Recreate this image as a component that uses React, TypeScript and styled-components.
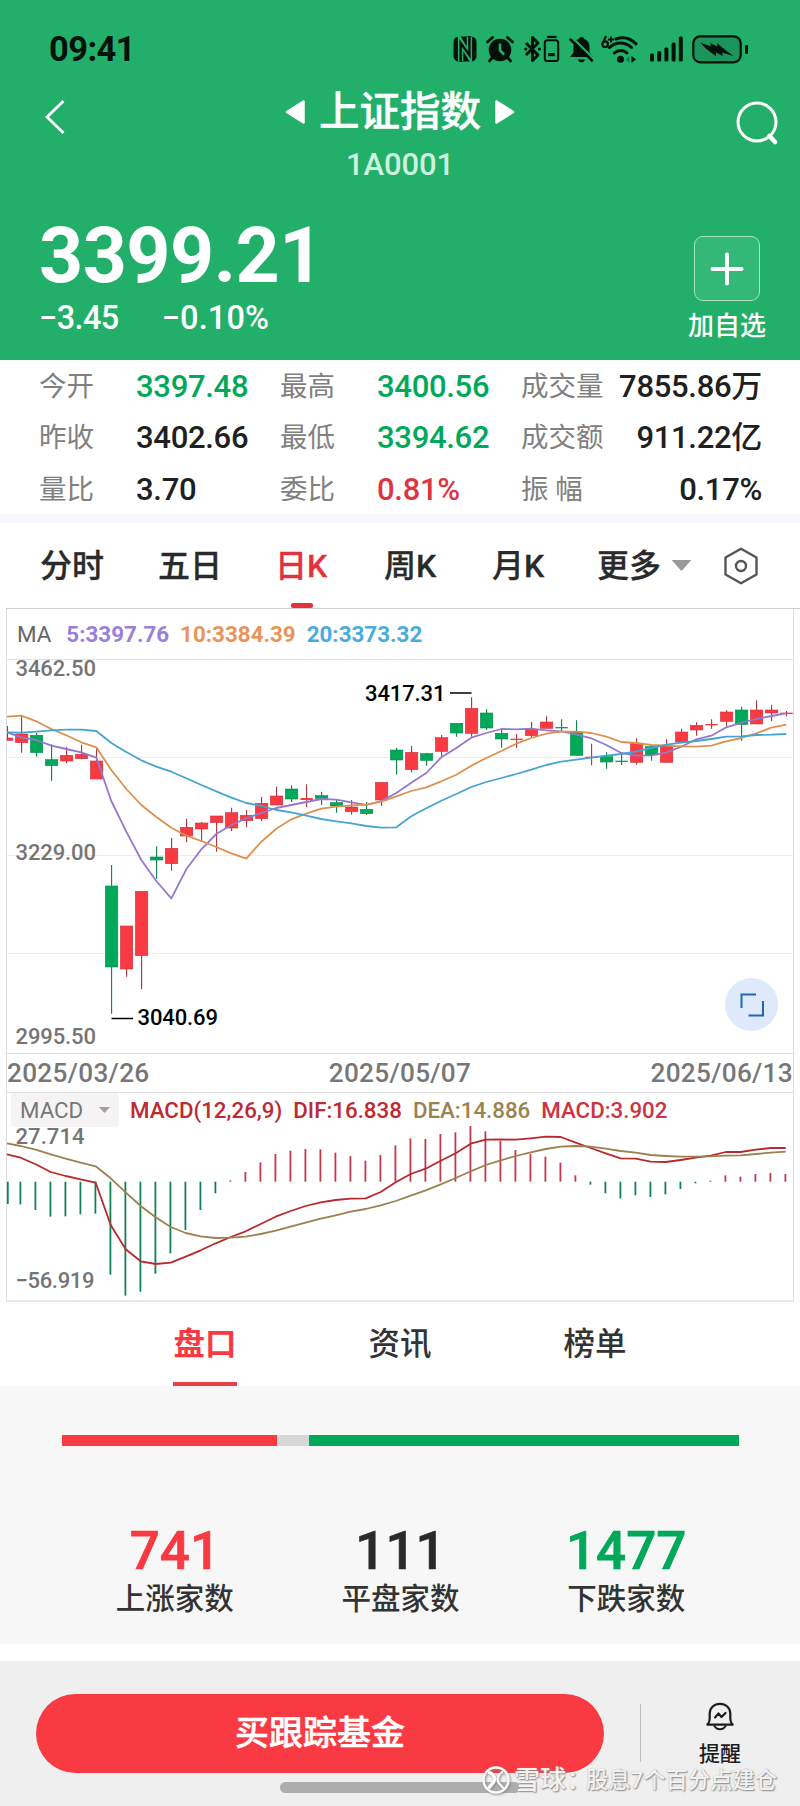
import React from "react";
import styled, { createGlobalStyle } from "styled-components";

const GREEN = "#00a85a";
const RED = "#f93a42";

const Global = createGlobalStyle`
  * { box-sizing: border-box; }
  body { margin: 0; background: #fff; }
`;

const Page = styled.div`
  width: 800px;
  height: 1806px;
  display: flex;
  flex-direction: column;
  background: #fff;
  color: #262626;
  font-family: Roboto, "Noto Sans CJK SC", sans-serif;
  font-weight: 500;
  white-space: nowrap;
  overflow: hidden;
`;

/* ---------- header ---------- */

const Header = styled.header`
  height: 360px;
  flex: none;
  background: #22af69;
  color: #fff;
`;

const StatusBar = styled.div`
  height: 84px;
  padding: 14px 51px 0 49px;
  display: flex;
  align-items: center;
  justify-content: space-between;
  color: #02120a;
`;

const Clock = styled.span`
  font-size: 34.5px;
  font-weight: 700;
  letter-spacing: -0.6px;
`;

const StatusIcons = styled.div`
  display: flex;
  align-items: center;
  svg { display: block; }
`;

const NavBar = styled.div`
  height: 116px;
  display: grid;
  grid-template-columns: 120px 1fr 120px;
`;

const NavSide = styled.div<{ $end?: boolean }>`
  display: flex;
  justify-content: ${(p) => (p.$end ? "flex-end" : "flex-start")};
  padding: ${(p) => (p.$end ? "16px 20px 0 0" : "15px 0 0 43px")};
`;

const TitleBlock = styled.div`
  display: flex;
  flex-direction: column;
  align-items: center;
  padding-top: 2px;
`;

const TitleRow = styled.div`
  display: flex;
  align-items: center;
  gap: 13px;
  height: 52px;
`;

const Title = styled.h1`
  margin: 0;
  font-size: 40.5px;
  line-height: 54px;
  font-weight: 500;
  -webkit-text-stroke: 0.5px currentColor;
`;

const Code = styled.div`
  font-size: 31px;
  line-height: 36px;
  margin-top: 9px;
  font-weight: 500;
  letter-spacing: -0.1px;
  color: #cdf3df;
`;

const Quote = styled.div`
  display: flex;
  justify-content: space-between;
  padding: 0 34px 0 39px;
`;

const Price = styled.div`
  font-size: 77px;
  line-height: 90px;
  font-weight: 700;
  letter-spacing: -0.5px;
  margin-top: 11px;
`;

const Changes = styled.div`
  display: flex;
  gap: 43px;
  font-size: 32.5px;
  line-height: 38px;
  margin-top: -2px;
`;

const Change = styled.span<{ $spacing: number }>`
  letter-spacing: ${(p) => p.$spacing}px;
`;

const AddBox = styled.div`
  display: flex;
  flex-direction: column;
  align-items: center;
  padding-top: 36px;
`;

const AddButton = styled.div`
  width: 66px;
  height: 65px;
  border: 1.5px solid #a6e3c4;
  border-radius: 9px;
  background: #33b877;
  display: grid;
  place-items: center;
`;

const AddLabel = styled.div`
  margin-top: 6px;
  font-size: 26px;
  line-height: 38px;
`;

/* ---------- stats ---------- */

const Stats = styled.section`
  flex: none;
  height: 154px;
  padding: 1px 38px 0 39px;
  display: grid;
  grid-template-columns: 97px 144px 97px 144px 95px 1fr;
  grid-template-rows: repeat(3, 51.5px);
  align-items: center;
  line-height: 40px;
`;

const StatLabel = styled.span`
  font-size: 27.5px;
  font-weight: 400;
  color: #808080;
`;

const StatValue = styled.span<{ $color?: string; $right?: boolean }>`
  font-size: 31px;
  letter-spacing: -0.3px;
  color: ${(p) => p.$color || "#202020"};
  text-align: ${(p) => (p.$right ? "right" : "left")};
  margin-left: ${(p) => (p.$right ? "-20px" : "0")};
`;

const Separator = styled.div`
  flex: none;
  height: 9px;
  background: #f6f6fd;
`;

/* ---------- period tabs ---------- */

const Periods = styled.nav`
  flex: none;
  height: 86px;
  display: flex;
  border-bottom: 1px solid #cfcfcf;
  margin-left: 6px;
  padding-left: 34px;
`;

const Period = styled.div<{ $active?: boolean; $width: number }>`
  width: ${(p) => p.$width}px;
  height: 85px;
  display: flex;
  align-items: center;
  font-size: 32px;
  line-height: 86px;
  color: ${(p) => (p.$active ? "#e2323f" : "#2a2a2a")};
  -webkit-text-stroke: 0.3px currentColor;
`;

const PeriodInner = styled.div<{ $active?: boolean }>`
  height: 85px;
  margin-left: -1px;
  position: relative;
  &::after {
    content: "";
    display: ${(p) => (p.$active ? "block" : "none")};
    position: absolute;
    left: 50%;
    bottom: 0;
    width: 22px;
    height: 5px;
    margin-left: -10px;
    border-radius: 2px;
    background: #e2323f;
  }
`;

const Glyph = styled.svg<{ $ml?: number }>`
  display: block;
  flex: none;
  margin-left: ${(p) => p.$ml || 0}px;
`;

/* ---------- chart ---------- */

const Chart = styled.section`
  flex: none;
  height: 693px;
  width: 788px;
  margin-left: 6px;
  border: 1px solid #dedede;
  border-top: 0;
  border-bottom: 2px solid #e8e8e8;
`;

const Averages = styled.div`
  height: 50px;
  display: flex;
  gap: 11px;
  padding-left: 10px;
  align-items: center;
  font-size: 22.4px;
`;

const Legend = styled.span<{ $color: string; $light?: boolean; $bold?: boolean }>`
  color: ${(p) => p.$color};
  font-weight: ${(p) => (p.$light ? 400 : p.$bold ? 700 : 500)};
  margin-right: ${(p) => (p.$light ? 4 : 0)}px;
`;

const PlotArea = styled.div`
  position: relative;
  height: 395px;
  border-top: 1px solid #e2e2e2;
  border-bottom: 1px solid #dcdcdc;
`;

const Plot = styled.svg`
  display: block;
  overflow: visible;
  font-family: Roboto, sans-serif;
  font-weight: 500;
  font-size: 22px;
`;

const ExpandButton = styled.div`
  position: absolute;
  right: 15px;
  bottom: 22px;
  width: 53px;
  height: 53px;
  border-radius: 50%;
  background: #dfe9fc;
  display: grid;
  place-items: center;
`;

const Dates = styled.div`
  height: 39px;
  display: flex;
  justify-content: space-between;
  align-items: center;
  font-size: 26.2px;
  letter-spacing: 0.3px;
  color: #777;
  border-bottom: 1px solid #dedede;
`;

const MacdHeader = styled.div`
  height: 34px;
  display: flex;
  align-items: center;
  gap: 11px;
  padding: 0 0 1px 4px;
  font-size: 22.3px;
`;

const Selector = styled.div`
  width: 108px;
  height: 34px;
  padding: 0 9px;
  display: flex;
  align-items: center;
  justify-content: space-between;
  border-radius: 4px;
  background: #f6f3f5;
  color: #777;
  font-weight: 400;
`;

/* ---------- lower tabs and breadth ---------- */

const Sections = styled.nav`
  flex: none;
  height: 84px;
  display: flex;
  gap: 131px;
  padding-left: 173px;
  background: #fff;
`;

const Section = styled.div<{ $active?: boolean }>`
  width: 64px;
  height: 85px;
  text-align: center;
  font-size: 31.5px;
  line-height: 85px;
  color: ${(p) => (p.$active ? RED : "#333")};
  font-weight: ${(p) => (p.$active ? 700 : 500)};
  border-bottom: ${(p) => (p.$active ? "5px solid #e8404a" : "0")};
`;

const Breadth = styled.section`
  flex: none;
  height: 258px;
  background: #f7f7f7;
  padding: 49px 61px 0 62px;
`;

const BreadthBar = styled.div`
  display: flex;
  height: 11px;
`;

const Segment = styled.div<{ $width: number; $color: string }>`
  width: ${(p) => p.$width}px;
  background: ${(p) => p.$color};
`;

const Counts = styled.div`
  display: grid;
  grid-template-columns: repeat(3, 1fr);
  margin-top: 74px;
  text-align: center;
`;

const Count = styled.div<{ $color: string }>`
  font-size: 53px;
  line-height: 62px;
  -webkit-text-stroke: 0.7px currentColor;
  color: ${(p) => p.$color};
`;

const CountLabel = styled.div`
  font-size: 29.5px;
  line-height: 40px;
  margin-top: -3px;
  color: #333;
`;

/* ---------- footer ---------- */

const Footer = styled.footer`
  margin-top: 17px;
  flex: none;
  height: 145px;
  background: #efefef;
  position: relative;
`;

const FooterRow = styled.div`
  display: flex;
  align-items: flex-start;
  padding: 33px 0 0 36px;
`;

const BuyButton = styled.div`
  width: 568px;
  height: 79px;
  border-radius: 40px;
  background: ${RED};
  color: #fff;
  font-size: 34px;
  line-height: 79px;
  text-align: center;
  -webkit-text-stroke: 0.5px currentColor;
`;

const Divider = styled.div`
  width: 1px;
  height: 58px;
  margin: 10px 0 0 36px;
  background: #bdbdbd;
`;

const Reminder = styled.div`
  width: 44px;
  margin: 8px 0 0 57px;
  display: flex;
  flex-direction: column;
  align-items: center;
  font-size: 21px;
  line-height: 28px;
  color: #1c1c1c;
  gap: 9px;
`;

const HomeIndicator = styled.div`
  width: 240px;
  height: 11px;
  margin: 9px auto 0;
  border-radius: 6px;
  background: #adadad;
`;

const Watermark = styled.div`
  position: absolute;
  left: 481px;
  top: 103px;
  height: 32px;
  display: flex;
  align-items: center;
  color: #f2f2f2;
  font-size: 22.3px;
  line-height: 34px;
  text-shadow: 1px 1px 1.5px #888, 0 0 1px #aaa;
  svg { filter: drop-shadow(1px 1px 1px #888); }
`;

const WatermarkBrand = styled.span`
  font-size: 26px;
  font-weight: 500;
  width: 72px;
  margin-left: 3px;
`;

/* ---------- data ---------- */

const stats: [string, string, string?][][] = [
  [["今开", "3397.48", GREEN], ["最高", "3400.56", GREEN], ["成交量", "7855.86万"]],
  [["昨收", "3402.66"], ["最低", "3394.62", GREEN], ["成交额", "911.22亿"]],
  [["量比", "3.70"], ["委比", "0.81%", "#dd3540"], ["振 幅", "0.17%"]],
];

// [rising, high, body top, body bottom, low], in thirds of a pixel from the top of the plot
const candles: number[][] = [
  [1, 258, 294, 301, 301], [1, 228, 282, 308, 338], [0, 278, 286, 338, 350], [0, 313, 359, 377, 422],
  [1, 322, 346, 363, 370], [1, 314, 343, 356, 358], [1, 322, 363, 417, 417], [0, 675, 738, 981, 1121],
  [1, 858, 858, 987, 1010], [1, 754, 754, 947, 1048], [0, 619, 651, 660, 716], [1, 594, 625, 671, 692],
  [1, 536, 562, 588, 607], [1, 546, 549, 567, 604], [1, 528, 528, 548, 635], [1, 503, 518, 564, 573],
  [1, 510, 526, 542, 562], [1, 471, 490, 536, 543], [1, 440, 468, 495, 496], [0, 436, 447, 477, 486],
  [1, 433, 474, 480, 502], [0, 455, 467, 476, 495], [0, 480, 488, 498, 518], [1, 480, 501, 515, 524],
  [0, 486, 508, 521, 524], [1, 427, 427, 480, 498], [0, 323, 330, 360, 404], [1, 318, 337, 389, 397],
  [0, 339, 341, 361, 377], [1, 285, 293, 334, 350], [0, 250, 250, 279, 290], [1, 172, 205, 280, 290],
  [0, 208, 219, 264, 270], [0, 270, 280, 297, 323], [1, 282, 296, 300, 323], [1, 246, 268, 287, 292],
  [1, 229, 246, 265, 265], [0, 238, 261, 265, 273], [0, 241, 276, 346, 346], [1, 311, 350, 354, 376],
  [0, 337, 350, 366, 386], [0, 345, 362, 366, 375], [1, 295, 310, 367, 374], [0, 316, 320, 345, 362],
  [1, 298, 318, 367, 367], [1, 266, 276, 306, 306], [1, 247, 256, 270, 287], [1, 238, 252, 256, 266],
  [1, 211, 216, 244, 258], [0, 200, 210, 253, 302], [1, 181, 210, 252, 252], [1, 195, 210, 219, 243],
  [1, 213, 218, 222, 229],
];

const ma5 = [277, 292, 300, 317, 327, 337, 353, 483, 575, 660, 723, 775, 688, 628, 582, 555, 535, 519, 504, 495, 486, 477, 479, 487, 495, 483, 459, 428, 399, 352, 324, 293, 279, 267, 268, 266, 271, 274, 283, 295, 315, 339, 347, 346, 338, 320, 298, 287, 262, 248, 237, 228, 220];
const ma10 = [230, 227, 244, 267, 286, 307, 322, 390, 447, 495, 531, 563, 587, 603, 621, 640, 656, 605, 566, 538, 521, 506, 500, 496, 494, 485, 469, 453, 442, 424, 404, 377, 354, 333, 311, 294, 281, 275, 275, 279, 290, 306, 309, 315, 317, 319, 320, 317, 304, 294, 280, 263, 254];
const ma20 = [277, 278, 275, 271, 269, 269, 273, 309, 336, 361, 380, 395, 415, 435, 454, 473, 489, 498, 510, 517, 527, 537, 544, 550, 558, 563, 562, 529, 505, 482, 462, 441, 426, 414, 402, 389, 375, 365, 359, 353, 347, 342, 334, 324, 314, 308, 303, 297, 290, 289, 285, 284, 282];

const histogram = [462, 463, 480, 500, 499, 493, 491, 674, 737, 725, 671, 610, 540, 480, 430, 391, 366, 337, 312, 302, 297, 298, 308, 318, 332, 315, 286, 265, 267, 252, 247, 228, 244, 272, 300, 312, 320, 338, 376, 404, 430, 445, 436, 441, 433, 417, 400, 392, 376, 380, 372, 369, 372];
const dif = [313, 323, 343, 366, 378, 388, 398, 525, 598, 634, 642, 638, 620, 601, 580, 561, 544, 522, 500, 483, 468, 457, 450, 446, 445, 426, 397, 372, 356, 332, 310, 281, 269, 268, 269, 265, 260, 261, 278, 294, 310, 325, 326, 335, 336, 330, 323, 317, 306, 306, 299, 294, 294];
const dea = [280, 288, 299, 313, 326, 338, 349, 385, 427, 468, 502, 531, 549, 559, 564, 563, 560, 552, 542, 530, 518, 506, 496, 485, 477, 466, 453, 437, 421, 403, 384, 364, 345, 331, 318, 307, 297, 290, 288, 290, 296, 303, 308, 315, 318, 320, 320, 319, 317, 316, 312, 308, 305];

// A series starts at the left frame edge when its first point would fall outside it
const toLine = (ys: number[], x0: number, y0: number) =>
  ys.map((y, i) => `${Math.max(7, x0 + 15 * i).toFixed(1)},${(y0 + y / 3).toFixed(1)}`).join(" ");

/* ---------- icons ---------- */

const NfcIcon = () => (
  <svg width="24" height="26" viewBox="0 0 24 26">
    <rect x="0.5" y="0.5" width="23" height="25" rx="5.5" fill="#02120a" />
    <path d="M7.6 25V5.5L16.4 20V1" fill="none" stroke="#22af69" strokeWidth="5.4" />
    <path d="M7.6 26V7L16.4 19V0" fill="none" stroke="#02120a" strokeWidth="2.4" />
  </svg>
);

const AlarmIcon = () => (
  <Glyph $ml={9} width="28" height="27" viewBox="0 0 28 27">
    <circle cx="14" cy="14" r="11.3" fill="#02120a" />
    <path d="M1.5 6L6.5 1.5M26.5 6L21.5 1.5M6 22L3.5 25M22 22l2.5 3" stroke="#02120a" strokeWidth="2.8" strokeLinecap="round" />
    <path d="M14 7.5V14.5L18 18.5" fill="none" stroke="#22af69" strokeWidth="2.6" />
  </Glyph>
);

const BluetoothIcon = () => (
  <Glyph $ml={10} width="36" height="28" viewBox="0 0 36 28">
    <path d="M2 8L14 20L8.5 25.5V2.5L14 8L2 20" fill="none" stroke="#02120a" strokeWidth="3" strokeLinejoin="round" />
    <circle cx="1.8" cy="14" r="1.6" fill="#02120a" />
    <circle cx="15.4" cy="14" r="1.6" fill="#02120a" />
    <rect x="20.8" y="5.2" width="13.4" height="20.8" rx="2.6" fill="none" stroke="#02120a" strokeWidth="2" />
    <rect x="23" y="0.8" width="9.5" height="2.3" fill="#02120a" />
    <rect x="24.2" y="18" width="6.5" height="3.2" fill="#02120a" />
  </Glyph>
);

const MutedBellIcon = () => (
  <Glyph $ml={9} width="25" height="27" viewBox="0 0 25 27">
    <path d="M12.5 1c1.6 0 2.4.9 2.6 2 3.6 1 5.4 4 5.4 7.5v6l3.5 4.5H1l3.5-4.5v-6C4.5 7 6.3 4 9.9 3c.2-1.1 1-2 2.6-2z" fill="#02120a" />
    <path d="M9 23.5h7c-.5 2-1.8 2.8-3.5 2.8S9.500 25.500 9 23.500z" fill="#02120a" />
    <path d="M3.5 2L25 23" stroke="#22af69" strokeWidth="2.2" />
    <path d="M1.5 3.5L23 24.5" stroke="#02120a" strokeWidth="2.5" strokeLinecap="round" />
  </Glyph>
);

const WifiIcon = () => (
  <Glyph $ml={7} width="37" height="29" viewBox="0 0 37 29">
    <path d="M5 1L2.2 7.5" stroke="#02120a" strokeWidth="2.2" />
    <circle cx="4.2" cy="9.2" r="2.8" fill="none" stroke="#02120a" strokeWidth="2.2" />
    <path d="M7 4.5h6M10 1.5v6" stroke="#02120a" strokeWidth="1.9" />
    <path d="M15 4C22 1.5 29.5 3.5 35 8.8M8.5 12.5c6.5-6 15.500-6 22 0M13.500 18c3.500-3.400 9-3.400 12.500 0" fill="none" stroke="#02120a" strokeWidth="3" strokeLinecap="round" />
    <circle cx="19.5" cy="24.2" r="3.5" fill="#02120a" />
    <path d="M30.5 21l4.5 3.5l-4.5 3.5z" fill="#02120a" />
    <path d="M28.5 21l-4 3.5l4 3.5z" fill="#128050" />
  </Glyph>
);

const SignalIcon = () => (
  <Glyph $ml={12} width="33" height="26" viewBox="0 0 33 26">
    {[8, 10.5, 14, 19, 25].map((h, i) => (
      <rect key={h} x={i * 7.2} y={25.5 - h} width="4" height={h} rx="1.5" fill="#02120a" />
    ))}
  </Glyph>
);

const BatteryIcon = () => (
  <Glyph $ml={9} width="57" height="29" viewBox="0 0 57 29">
    <rect x="1.3" y="1.3" width="47.4" height="26" rx="7" fill="#1c955c" stroke="#02120a" strokeWidth="2.2" />
    <rect x="53" y="10" width="3" height="9" rx="1.2" fill="#02120a" />
    <path d="M8 7.5L19 11.5L18 8L25.5 11.5L25 8L34 15.5L41.5 21L30 17.5L31 21L24 17.5L24 21.2L15 14.5Z" fill="#02120a" />
  </Glyph>
);

/* ---------- page ---------- */

export default function App() {
  return (
    <>
      <Global />
      <Page>
        <Header>
          <StatusBar>
            <Clock>09:41</Clock>
            <StatusIcons>
              <NfcIcon />
              <AlarmIcon />
              <BluetoothIcon />
              <MutedBellIcon />
              <WifiIcon />
              <SignalIcon />
              <BatteryIcon />
            </StatusIcons>
          </StatusBar>
          <NavBar>
            <NavSide>
              <svg width="24" height="36" viewBox="0 0 24 36">
                <path d="M20.5 2L4 18L20.5 34" fill="none" stroke="#fff" strokeWidth="2.8" />
              </svg>
            </NavSide>
            <TitleBlock>
              <TitleRow>
                <svg width="21" height="24" viewBox="0 0 21 24">
                  <path d="M18.5 1.5L2 12L18.5 22.5Z" fill="#fff" stroke="#fff" strokeWidth="2.5" strokeLinejoin="round" />
                </svg>
                <Title>上证指数</Title>
                <svg width="21" height="24" viewBox="0 0 21 24">
                  <path d="M2.5 1.5L19 12L2.5 22.5Z" fill="#fff" stroke="#fff" strokeWidth="2.5" strokeLinejoin="round" />
                </svg>
              </TitleRow>
              <Code>1A0001</Code>
            </TitleBlock>
            <NavSide $end>
              <svg width="46" height="46" viewBox="0 0 46 46">
                <circle cx="23" cy="22" r="19" fill="none" stroke="#fff" strokeWidth="3" />
                <path d="M35.5 36l5.5 6" stroke="#fff" strokeWidth="4.5" strokeLinecap="round" />
              </svg>
            </NavSide>
          </NavBar>
          <Quote>
            <div>
              <Price>3399.21</Price>
              <Changes>
                <Change $spacing={-0.6}>−3.45</Change>
                <Change $spacing={0.1}>−0.10%</Change>
              </Changes>
            </div>
            <AddBox>
              <AddButton>
                <svg width="34" height="34" viewBox="0 0 34 34">
                  <path d="M17 2.5V31.5M2.5 17H31.5" stroke="#fff" strokeWidth="4" strokeLinecap="round" />
                </svg>
              </AddButton>
              <AddLabel>加自选</AddLabel>
            </AddBox>
          </Quote>
        </Header>

        <Stats>
          {stats.map((row) =>
            row.map(([label, value, color], i) => (
              <React.Fragment key={label}>
                <StatLabel>{label}</StatLabel>
                <StatValue $color={color} $right={i === 2}>{value}</StatValue>
              </React.Fragment>
            ))
          )}
        </Stats>
        <Separator />

        <Periods>
          <Period $width={118}>分时</Period>
          <Period $width={118}>五日</Period>
          <Period $width={108} $active><PeriodInner $active>日K</PeriodInner></Period>
          <Period $width={108}>周K</Period>
          <Period $width={105}>月K</Period>
          <Period $width={160}>
            更多
            <Glyph $ml={10} width="21" height="13" viewBox="0 0 21 13">
              <path d="M1.5 1.5H19.5L10.5 11.5Z" fill="#999" stroke="#999" strokeLinejoin="round" />
            </Glyph>
            <Glyph $ml={31} width="36" height="38" viewBox="0 0 36 38">
              <path d="M18 1.8L33.5 10.5V27.5L18 36.2L2.5 27.5V10.5Z" fill="none" stroke="#555" strokeWidth="2.4" strokeLinejoin="round" />
              <circle cx="18" cy="19" r="5" fill="none" stroke="#555" strokeWidth="2.4" />
            </Glyph>
          </Period>
        </Periods>

        <Chart>
          <Averages>
            <Legend $color="#666" $light>MA</Legend>
            <Legend $color="#9a80d8" $bold>5:3397.76</Legend>
            <Legend $color="#e8955a" $bold>10:3384.39</Legend>
            <Legend $color="#4aabdc" $bold>20:3373.32</Legend>
          </Averages>
          <PlotArea>
            <Plot width="786" height="392" viewBox="7 660 786 392">
              {[757.5, 855.5, 953.5].map((y) => (
                <path key={y} d={`M7 ${y}H793`} stroke="#ececec" />
              ))}
              {candles.map(([up, high, top, bottom, low], i) => {
                const x = 6.6 + 15 * i;
                const left = Math.max(7, x - 6.2);
                const right = Math.min(793, x + 6.2);
                const thin = bottom - top < 7;
                return (
                  <g key={i}>
                    <path d={`M${Math.max(7.5, x)} ${640 + high / 3}V${640 + low / 3}`} stroke={up ? "#a8323c" : "#0b7f4b"} strokeWidth="1.1" />
                    <rect
                      x={left}
                      y={640 + top / 3}
                      width={right - left}
                      height={(bottom - top) / 3}
                      fill={up ? RED : GREEN}
                      stroke={up ? "#c9343f" : "#058a4c"}
                      strokeWidth={thin ? 0 : 0.6}
                    />
                  </g>
                );
              })}
              <g fill="none" strokeWidth="1.8" strokeLinejoin="round">
                <polyline points={toLine(ma5, 6.3, 640)} stroke="#9578cc" />
                <polyline points={toLine(ma10, 6.3, 640)} stroke="#dd9150" />
                <polyline points={toLine(ma20, 6.3, 640)} stroke="#45a5d0" />
              </g>
              <g fill="#757575">
                <text x="15.5" y="676" textLength="80.5">3462.50</text>
                <text x="15.5" y="859.5" textLength="80.5">3229.00</text>
                <text x="15.5" y="1043.5" textLength="80.5">2995.50</text>
              </g>
              <g fill="#000">
                <text x="137.5" y="1024.7" textLength="80.5">3040.69</text>
                <text x="365" y="701" textLength="80.5">3417.31</text>
                <path d="M111.5 1018.5H133M450 693H471.5" stroke="#000" strokeWidth="1.7" />
              </g>
            </Plot>
            <ExpandButton>
              <svg width="26" height="26" viewBox="0 0 26 26">
                <path d="M2.5 16V2.5H17M24 9V23.5H9.5" fill="none" stroke="#2465b5" strokeWidth="2" />
              </svg>
            </ExpandButton>
          </PlotArea>
          <Dates>
            <span>2025/03/26</span>
            <span>2025/05/07</span>
            <span>2025/06/13</span>
          </Dates>
          <MacdHeader>
            <Selector>
              MACD
              <svg width="11" height="6" viewBox="0 0 11 6">
                <path d="M0 0H11L5.5 6Z" fill="#a0a0a0" />
              </svg>
            </Selector>
            <Legend $color="#bd2a31">MACD(12,26,9)</Legend>
            <Legend $color="#bd2a31">DIF:16.838</Legend>
            <Legend $color="#9a8252">DEA:14.886</Legend>
            <Legend $color="#cd3340">MACD:3.902</Legend>
          </MacdHeader>
          <Plot width="786" height="173" viewBox="7 1127 786 173">
            {histogram.map((y, i) => {
              const x = Math.max(7.8, 5.4 + 15 * i);
              return (
                <path key={i} d={`M${x} 1181.7V${1050 + y / 3}`} stroke={y > 395 ? "#118052" : "#c4384a"} strokeWidth="1.8" />
              );
            })}
            <g fill="none" strokeWidth="1.8" strokeLinejoin="round">
              <polyline points={toLine(dif, 5.7, 1050)} stroke="#b8292f" />
              <polyline points={toLine(dea, 5.7, 1050)} stroke="#9a8250" />
            </g>
            <g fill="#757575">
              <text x="15.5" y="1143.5" textLength="69">27.714</text>
              <text x="15.5" y="1287.5" textLength="79">−56.919</text>
            </g>
          </Plot>
        </Chart>

        <Sections>
          <Section $active>盘口</Section>
          <Section>资讯</Section>
          <Section>榜单</Section>
        </Sections>

        <Breadth>
          <BreadthBar>
            <Segment $width={215} $color={RED} />
            <Segment $width={32} $color="#d6d6d6" />
            <Segment $width={430} $color={GREEN} />
          </BreadthBar>
          <Counts>
            <div>
              <Count $color={RED}>741</Count>
              <CountLabel>上涨家数</CountLabel>
            </div>
            <div>
              <Count $color="#2a2a2a">111</Count>
              <CountLabel>平盘家数</CountLabel>
            </div>
            <div>
              <Count $color={GREEN}>1477</Count>
              <CountLabel>下跌家数</CountLabel>
            </div>
          </Counts>
        </Breadth>

        <Footer>
          <FooterRow>
            <BuyButton>买跟踪基金</BuyButton>
            <Divider />
            <Reminder>
              <svg width="28" height="29" viewBox="0 0 28 29">
                <path d="M1.3 22.6C3.6 20.5 3.7 19 3.7 16.5V11.5C3.7 5.8 8.3 1.8 14 1.8S24.3 5.8 24.3 11.5V16.5C24.3 19 24.4 20.5 26.7 22.6Z" fill="none" stroke="#1c1c1c" strokeWidth="2.2" strokeLinejoin="round" />
                <path d="M8 23.5C9.5 26 11.5 27.3 14 27.3S18.5 26 20 23.5" fill="none" stroke="#1c1c1c" strokeWidth="2" />
                <path d="M9 15.5L12.5 11.5L15.5 15L19.5 11" fill="none" stroke="#1c1c1c" strokeWidth="2.2" strokeLinecap="round" strokeLinejoin="round" />
              </svg>
              提醒
            </Reminder>
          </FooterRow>
          <HomeIndicator />
          <Watermark>
            <svg width="30" height="30" viewBox="0 0 30 30">
              <circle cx="15" cy="15" r="12.5" fill="none" stroke="#fbfbfb" strokeWidth="2.4" />
              <path d="M7 7C13 9 15 13 12.5 17C11 20 8.5 21 7.5 23.5" fill="none" stroke="#fbfbfb" strokeWidth="3.4" />
              <path d="M22 6.5C17 9.5 15.5 14 17.5 17.5C19 20 21 21 22.5 23.5" fill="none" stroke="#fbfbfb" strokeWidth="2.4" />
            </svg>
            <WatermarkBrand>雪球：</WatermarkBrand>
            <span>股息7个百分点建仓</span>
          </Watermark>
        </Footer>
      </Page>
    </>
  );
}
